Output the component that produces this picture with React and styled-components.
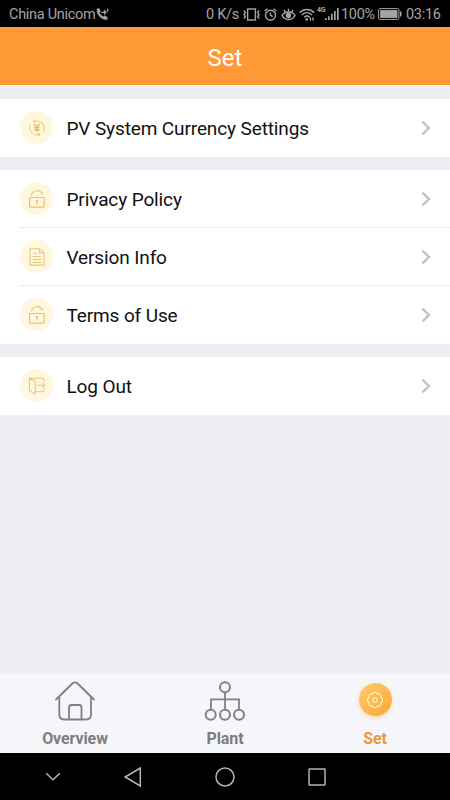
import React from "react";
import styled, { createGlobalStyle } from "styled-components";

const GlobalStyle = createGlobalStyle`
    * {
        box-sizing: border-box;
    }
    body {
        margin: 0;
        font-family: Roboto, "Liberation Sans", sans-serif;
    }
`;

const CallIcon = () => (
    <svg width="14" height="13" viewBox="0 0 14 13" fill="none" stroke="#a4a4a4">
        <path
            d="M1 .8 3.1 .4 4.4 3.4 3.3 4.6C4 6.3 5.3 7.8 7.2 8.7L8.6 7.7 11.6 9.4 11 11.4C6 12.5 .1 6.5 1 .8Z"
            fill="#a4a4a4"
            stroke="#a4a4a4"
            strokeWidth=".5"
        />
        <path d="M5.2 4.3H9.6M8 2.3 10 4.3 8 6.3M11.7 .8V3.8" strokeWidth="1.3" />
    </svg>
);

const VibrateIcon = () => (
    <svg width="17" height="13" viewBox="0 0 17 13" fill="none" stroke="#a4a4a4" strokeWidth="1.4">
        <rect x="4.6" y="1" width="7.8" height="11" />
        <path d="M1 2.5 2.3 4.5 1 6.5 2.3 8.5 1 10.5M16 2.5 14.7 4.5 16 6.5 14.7 8.5 16 10.5" />
    </svg>
);

const AlarmIcon = () => (
    <svg width="13" height="13" viewBox="0 0 13 13" fill="none" stroke="#a4a4a4" strokeWidth="1.4">
        <circle cx="6.5" cy="7.2" r="5" />
        <path d="M6.5 4.5V7.4L8.7 8.5M.7 3 3.6 .7M12.3 3 9.4 .7" />
    </svg>
);

const EyeIcon = () => (
    <svg width="15" height="13" viewBox="0 0 15 13" fill="none" stroke="#a4a4a4" strokeWidth="1.4">
        <path d="M1 7.5C4 2.8 11 2.8 14 7.5C11 12.9 4 12.9 1 7.5Z" />
        <circle cx="7.5" cy="7.5" r="2" fill="#a4a4a4" />
        <path d="M7.5 .7V4M3 1.8 4.5 4.4M12 1.8 10.5 4.4" />
    </svg>
);

const WifiIcon = () => (
    <svg width="16" height="13" viewBox="0 0 16 13" fill="none" stroke="#a4a4a4" strokeWidth="1.5">
        <path d="M.7 4.6C5 .3 11 .3 15.3 4.6M2.9 7C6 4 10 4 13.1 7M5.1 9.3C7 7.5 9 7.5 10.7 9.2" />
        <circle cx="7.7" cy="11.4" r="1.3" fill="#a4a4a4" stroke="none" />
        <path d="M11.4 9.3V12.7M14 9.3V12.7" strokeWidth="1.3" />
    </svg>
);

const SignalIcon = () => (
    <svg width="14" height="12" viewBox="0 0 14 12" fill="#a4a4a4">
        <path d="M0 10H1.7V12H0ZM3 8.3H4.7V12H3ZM6 5.7H7.7V12H6ZM9 3H10.7V12H9ZM12 0H13.7V12H12Z" />
    </svg>
);

const BatteryIcon = () => (
    <svg width="24" height="12" viewBox="0 0 24 12">
        <rect x=".6" y=".6" width="20.3" height="10.8" rx="1.2" fill="none" stroke="#a4a4a4" />
        <rect x="2.1" y="2.1" width="17.3" height="7.8" fill="#a4a4a4" />
        <rect x="22" y="3.5" width="1.5" height="5" fill="#a4a4a4" />
    </svg>
);

const CurrencyIcon = () => (
    <svg width="18" height="18" viewBox="0 0 18 18" fill="none" stroke="#efc76c" strokeWidth="1.1">
        <path d="M4.8 14.7A7.4 7.4 0 0 1 2.1 5.7M6 2.2H10.6A7.4 7.4 0 0 1 15.5 12.6M6.7 .6 5.2 2.2 6.8 3.7" />
        <path d="M6.5 15.7H11.5M10.3 14.2 11.9 15.7 10.3 17.2" />
        <path d="M6 4.7 8.8 8.2 11.6 4.7M8.8 8.2V13M6 8.5H11.6M6 10.7H11.6" strokeWidth="1.4" stroke="#f0bd50" />
    </svg>
);

const LockIcon = () => (
    <svg width="18" height="18" viewBox="0 0 18 18" fill="none" stroke="#edc366" strokeWidth="1.2">
        <rect x="1.6" y="7.5" width="14.6" height="9.6" rx=".5" />
        <path d="M3.2 5.3C5-.4 12.5-.9 14.5 4.5" />
        <circle cx="9" cy="11" r="1.2" fill="#edc366" stroke="none" />
        <path d="M9 11V14.2" />
    </svg>
);

const DocumentIcon = () => (
    <svg width="18" height="18" viewBox="0 0 18 18" fill="none" stroke="#edc873" strokeWidth="1.1">
        <path d="M2 .8H11.7L16 4.8V17.1H2ZM11.5 .8V5H16M4.7 5.2H9M4.7 8.5H13.3M4.7 11.5H13.3M4.7 14.5H13.3" />
    </svg>
);

const LogoutIcon = () => (
    <svg width="18" height="18" viewBox="0 0 18 18" fill="none" stroke="#edc873" strokeWidth="1.1">
        <path d="M1.5 1.2 7.2 4.3V17L1.5 13.8ZM1.5 1.2H14.5Q16.2 1.2 16.2 3V4.7M7.2 14.8H14.5Q16.2 14.8 16.2 13V11.5" />
        <path d="M9.2 8.2H16.5M14.2 5.8 16.6 8.2 14.2 10.6" />
    </svg>
);

const ChevronIcon = () => (
    <svg width="10" height="16" viewBox="0 0 10 16" fill="none" stroke="#c3c3c5" strokeWidth="2.4">
        <path d="M1.5 1.7 7.9 8 1.5 14.3" />
    </svg>
);

const HomeIcon = () => (
    <svg width="42" height="42" viewBox="0 0 42 42" fill="none" stroke="#7f7f83" strokeWidth="1.8" strokeLinecap="round">
        <path d="M2 19.5 18.4 3.5Q21 1.3 23.6 3.5L40 19.5" />
        <path d="M5.3 17V34.5Q5.3 39.5 10.3 39.5H32Q37 39.5 37 34.5V17" />
        <path d="M15 39V27.5Q15 25 17.5 25H25Q27.5 25 27.5 27.5V39" />
    </svg>
);

const PlantIcon = () => (
    <svg width="42" height="42" viewBox="0 0 42 42" fill="none" stroke="#818184" strokeWidth="2">
        <circle cx="21" cy="7.2" r="5" />
        <circle cx="6.7" cy="34.8" r="5" />
        <circle cx="21" cy="34.8" r="5" />
        <circle cx="35" cy="34.8" r="5" />
        <path d="M21 12.5V30M7 30V19.3H35V30" strokeWidth="1.8" />
    </svg>
);

const GearIcon = () => (
    <svg width="18" height="18" viewBox="-9 -9 18 18" fill="none" stroke="#fff3ba" strokeWidth="1.2">
        <path d="M-2.45-5.9A2.6 2.6 0 0 1 2.45-5.9A2.6 2.6 0 0 1 5.9-2.45A2.6 2.6 0 0 1 5.9 2.45A2.6 2.6 0 0 1 2.45 5.9A2.6 2.6 0 0 1-2.45 5.9A2.6 2.6 0 0 1-5.9 2.45A2.6 2.6 0 0 1-5.9-2.45A2.6 2.6 0 0 1-2.45-5.9Z" />
        <circle r="2.2" />
    </svg>
);

const groups = [
    [{ label: "PV System Currency Settings", icon: CurrencyIcon }],
    [
        { label: "Privacy Policy", icon: LockIcon },
        { label: "Version Info", icon: DocumentIcon },
        { label: "Terms of Use", icon: LockIcon },
    ],
    [{ label: "Log Out", icon: LogoutIcon }],
];

const App = () => {
    return (
        <Screen>
            <GlobalStyle />
            <StatusBar>
                <Carrier>
                    <StatusText $width={85}>China Unicom</StatusText>
                    <CallIcon />
                </Carrier>
                <StatusItems>
                    <StatusText $width={37}>0 K/s</StatusText>
                    <VibrateIcon />
                    <StatusGap $width={4} />
                    <AlarmIcon />
                    <StatusGap $width={4} />
                    <EyeIcon />
                    <StatusGap $width={3} />
                    <WifiIcon />
                    <NetworkType>4G</NetworkType>
                    <SignalIcon />
                    <StatusGap $width={2} />
                    <StatusText $width={37}>100%</StatusText>
                    <BatteryIcon />
                    <StatusGap $width={4} />
                    <StatusText $width={35}>03:16</StatusText>
                </StatusItems>
            </StatusBar>
            <Header>Set</Header>
            <Content>
                {groups.map((rows, index) => (
                    <Group key={index}>
                        {rows.map(({ label, icon: Icon }) => (
                            <Row key={label}>
                                <IconCircle>
                                    <Icon />
                                </IconCircle>
                                <RowLabel>{label}</RowLabel>
                                <ChevronIcon />
                            </Row>
                        ))}
                    </Group>
                ))}
            </Content>
            <TabBar>
                <Tab>
                    <HomeIcon />
                    <TabLabel>Overview</TabLabel>
                </Tab>
                <Tab>
                    <PlantIcon />
                    <TabLabel>Plant</TabLabel>
                </Tab>
                <Tab>
                    <ActiveSlot>
                        <ActiveCircle>
                            <GearIcon />
                        </ActiveCircle>
                    </ActiveSlot>
                    <TabLabel $active>Set</TabLabel>
                </Tab>
            </TabBar>
            <SystemNav>
                <svg width="16" height="10" viewBox="0 0 16 10">
                    <path d="M1.2 1.2 8 7.8 14.8 1.2" />
                </svg>
                <svg width="18" height="20" viewBox="0 0 18 20">
                    <path d="M1.2 10 16.3 1V19Z" />
                </svg>
                <svg width="20" height="20" viewBox="0 0 20 20">
                    <circle cx="10" cy="10" r="9" />
                </svg>
                <svg width="18" height="18" viewBox="0 0 18 18">
                    <rect x="1" y="1" width="16" height="16" rx=".5" />
                </svg>
            </SystemNav>
        </Screen>
    );
};

const Screen = styled.div`
    width: 450px;
    height: 800px;
    display: flex;
    flex-direction: column;
    background: #efeef4;
    overflow: hidden;
    svg {
        display: block;
        flex: none;
    }
`;

const StatusBar = styled.div`
    height: 27px;
    flex: none;
    display: flex;
    justify-content: space-between;
    align-items: center;
    padding: 1px 9px 0;
    background: #000;
    color: #a4a4a4;
    font-size: 14.5px;
    letter-spacing: -0.3px;
`;

const Carrier = styled.div`
    display: flex;
    align-items: center;
    gap: 2px;
`;

const StatusItems = styled.div`
    display: flex;
    align-items: center;
`;

const StatusText = styled.span`
    width: ${({ $width }) => $width}px;
    padding-top: 1px;
    white-space: nowrap;
`;

const StatusGap = styled.span`
    width: ${({ $width }) => $width}px;
`;

const NetworkType = styled.span`
    width: 10px;
    padding: 0 0 8px 2px;
    font-size: 7px;
    font-weight: 700;
    line-height: 7px;
`;

const Header = styled.header`
    height: 58px;
    flex: none;
    display: flex;
    justify-content: center;
    align-items: center;
    padding-top: 3px;
    background: #ff9935;
    color: #fff;
    font-size: 24px;
`;

const Content = styled.main`
    flex: 1;
    display: flex;
    flex-direction: column;
    gap: 13px;
    padding-top: 14px;
`;

const Group = styled.section`
    background: #fff;
`;

const Row = styled.div`
    height: 58px;
    display: flex;
    align-items: center;
    margin-left: 19px;
    padding-right: 19px;
    border-bottom: 1px solid #ececee;
    &:last-child {
        border-bottom-color: transparent;
    }
`;

const IconCircle = styled.div`
    width: 33px;
    height: 33px;
    margin-left: 1px;
    display: flex;
    align-items: center;
    justify-content: center;
    border-radius: 50%;
    background: #fff7df;
`;

const RowLabel = styled.span`
    flex: 1;
    margin-left: 13.5px;
    padding-top: 1px;
    color: #111;
    font-size: 19px;
    letter-spacing: -0.12px;
`;

const TabBar = styled.nav`
    height: 79px;
    flex: none;
    display: grid;
    grid-template-columns: repeat(3, 1fr);
    background: #f6f6fa;
`;

const Tab = styled.div`
    display: flex;
    flex-direction: column;
    align-items: center;
    padding-top: 6px;
`;

const ActiveSlot = styled.div`
    height: 42px;
    padding-top: 3px;
`;

const ActiveCircle = styled.div`
    width: 33px;
    height: 33px;
    display: flex;
    align-items: center;
    justify-content: center;
    border-radius: 50%;
    background: linear-gradient(135deg, #ffcd68, #faa638);
    box-shadow: 0 2px 4px #f9b55c70;
`;

const TabLabel = styled.span`
    margin-top: 7px;
    font-size: 16px;
    font-weight: 700;
    letter-spacing: -0.1px;
    color: ${({ $active }) => ($active ? "#eb973a" : "#7d7d80")};
`;

const SystemNav = styled.div`
    height: 47px;
    flex: none;
    display: grid;
    grid-template-columns: 68px 92px 92px 92px;
    justify-items: center;
    align-items: center;
    padding-left: 19px;
    background: #000;
    svg {
        fill: none;
        stroke: #b4b4b4;
        stroke-width: 1.5;
    }
`;

export default App;
